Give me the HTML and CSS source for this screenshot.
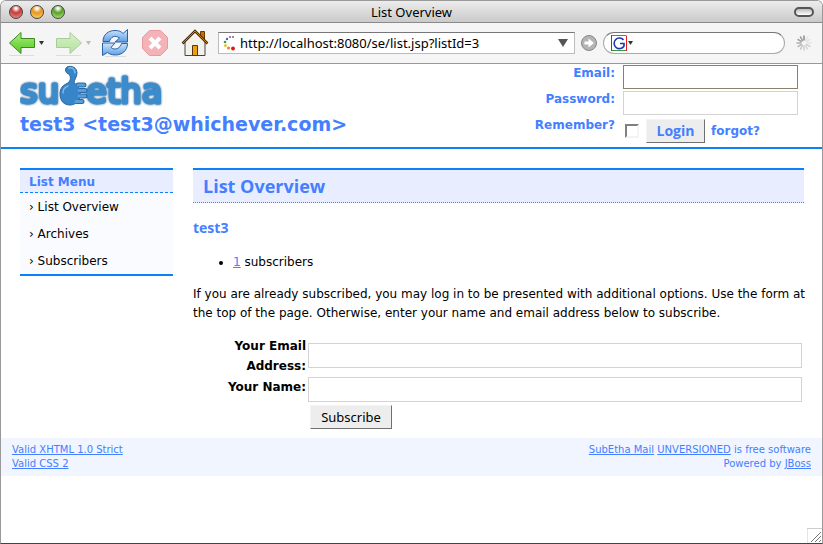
FILE: index.html
```html
<!DOCTYPE html>
<html lang="en">
<head>
<meta charset="utf-8">
<title>List Overview</title>
<link rel="stylesheet" href="styles.css">
</head>
<body>
<div class="window">
  <div class="titlebar">
    <div class="lights">
      <button class="light red" aria-label="Close"></button>
      <button class="light amber" aria-label="Minimize"></button>
      <button class="light green" aria-label="Zoom"></button>
    </div>
    <div class="window-title">List Overview</div>
    <button class="pill" aria-label="Toggle toolbar"></button>
  </div>

  <div class="toolbar">
    <button class="tool nav" aria-label="Back">
      <svg width="38" height="30" viewBox="0 0 38 30">
        <defs>
          <linearGradient id="leaf" x1="0" y1="0" x2="0" y2="1"><stop offset="0" stop-color="#b4ee8c"/><stop offset=".5" stop-color="#7cda4c"/><stop offset="1" stop-color="#5cc82c"/></linearGradient>
          <linearGradient id="sky" x1="0" y1="0" x2="0" y2="1"><stop offset="0" stop-color="#cfe6fb"/><stop offset="1" stop-color="#5a9fe6"/></linearGradient>
        </defs>
        <path d="M3 27.500h25" stroke="#ddd"/>
        <path d="M3.500 15 15 4.500v6h13.500v9H15v6z" fill="url(#leaf)" stroke="#3c8a1e" stroke-linejoin="round"/>
        <path d="M33 13h5l-2.500 4z" fill="#333"/>
      </svg>
    </button>
    <button class="tool nav faded" aria-label="Forward">
      <svg width="38" height="30" viewBox="0 0 38 30">
        <path d="M3 27.500h25" stroke="#bbb"/>
        <path d="M28.500 15 17 4.500v6H3.500v9H17v6z" fill="url(#leaf)" stroke="#3c8a1e" stroke-linejoin="round"/>
        <path d="M33 13h5l-2.500 4z" fill="#666"/>
      </svg>
    </button>
    <button class="tool" aria-label="Reload">
      <svg width="30" height="30" viewBox="0 0 30 30">
        <path d="M5 28.500h21" stroke="#ddd"/>
        <g fill="url(#sky)" stroke="#2a61a8" stroke-linejoin="round">
          <path d="M3 13.500C3 6 9 2.500 15 2.500c4 0 6 1 8 3l4.500-4V14H15l4.500-4C15 6.500 10.500 9 9.500 13.500z"/>
          <path d="M27.500 15.500c0 7.500-6 11.500-12 11.500-4 0-6-1-8-2.500L2.500 27.500V15H15L11 19.500c4 3.500 9.500.5 10.500-4z"/>
        </g>
      </svg>
    </button>
    <button class="tool" aria-label="Stop">
      <svg width="30" height="30" viewBox="0 0 30 30">
        <path d="M9.500 2.500h11L27.500 9.500v11L20.500 27.500h-11L2.500 20.500v-11z" fill="#f4b3b8" stroke="#e79aa0" stroke-linejoin="round"/>
        <path d="m10 10 10 10m0-10-10 10" stroke="#fff" stroke-width="4"/>
      </svg>
    </button>
    <button class="tool" aria-label="Home">
      <svg width="30" height="30" viewBox="0 0 30 30">
        <path d="M20.500 3.500h4v9l-4-4z" fill="#b87408" stroke="#6b3d05"/>
        <path d="M5 14 15 4l10 10v13.500H5z" fill="#f3f1ec" stroke="#444"/>
        <path d="M2.500 15.500 15 3l12.500 12.500" fill="none" stroke="#4b2b08" stroke-width="2.500"/>
        <path d="M3 15 15 3l12 12" fill="none" stroke="#c98210"/>
        <path d="M12.500 17.500h5v10h-5z" fill="#eda011" stroke="#5c3306"/>
      </svg>
    </button>
    <div class="address">
      <svg width="14" height="16" viewBox="0 0 14 16">
        <circle cx="10" cy="2" r="1" fill="#a04c9c"/><circle cx="7" cy="2" r="1" fill="#6a5ca8"/><circle cx="4" cy="4" r="1.200" fill="#4a68b0"/>
        <circle cx="2" cy="7" r="1.300" fill="#3c9a58"/><circle cx="2.500" cy="10.500" r="1.500" fill="#f0c020"/><circle cx="5.500" cy="13" r="1.600" fill="#ee8a1c"/><circle cx="10" cy="13.500" r="1.900" fill="#d81818"/>
      </svg>
      <input class="url" type="text" aria-label="Address" value="http://localhost:8080/se/list.jsp?listId=3">
      <svg width="10" height="8" viewBox="0 0 10 8"><path d="M0 0h10L5 8z" fill="#555"/></svg>
    </div>
    <button class="go" aria-label="Go">
      <svg width="16" height="16" viewBox="0 0 16 16"><circle cx="8" cy="8" r="7.500" fill="#b4b4b4" stroke="#888"/><path d="M3.500 6.500h4v-3L13 8l-5.500 4.500v-3h-4z" fill="#fff"/></svg>
    </button>
    <div class="search">
      <svg width="23" height="17" viewBox="0 0 23 17">
        <path d="M1 .5h14.500" stroke="#3a9a3a"/><path d="M.5 0v16" stroke="#2a48c8"/><path d="M1 15.500h14" stroke="#3a9a3a"/><path d="M15.500 1v15" stroke="#e02020"/>
        <path d="M12.500 5A5.300 5.300 0 1 0 13 11V8.500H9" fill="none" stroke="#1638b0" stroke-width="1.600"/>
        <path d="M17 6h5l-2.500 4z" fill="#333"/>
      </svg>
      <input type="text" aria-label="Search">
    </div>
    <svg class="throbber" width="16" height="16" viewBox="0 0 16 16" stroke-width="1.500" stroke-linecap="round">
      <path d="M8 1v4" stroke="#888"/><path d="m4.500 2 2 3.500" stroke="#999"/><path d="M2 4.500 5.500 6.500" stroke="#a4a4a4"/><path d="M1 8h4" stroke="#b0b0b0"/><path d="m2 11.500 3.500-2" stroke="#bbb"/><path d="m4.500 14 2-3.500" stroke="#c4c4c4"/><path d="M8 15v-4" stroke="#ccc"/><path d="m11.500 14-2-3.500M14 11.500l-3.500-2" stroke="#d4d4d4"/><path d="M15 8h-4M14 4.500l-3.500 2M11.500 2l-2 3.500" stroke="#e4e4e4"/>
    </svg>
  </div>

  <header class="site-header">
    <div class="brand">
      <svg width="150" height="46" viewBox="0 0 150 46" role="img" aria-label="subetha">
        <g class="wordmark">
          <text x="0" y="38">su</text>
          <text x="66" y="38">etha</text>
        </g>
        <path d="M58 20h6M60 25.500h5M60 31h5M57 36.500h5" stroke="#2b669f" stroke-width="5" stroke-linecap="round"/>
        <path d="M47 2c5-2 10 1 10 6 0 4-3 7-3 10 4 2 5 5 6 9 1 8-4 13-10 13s-10-4-10-11c0-6 3-9 8-11 3-3 3-6 1-9-3 0-5-5-2-7z" fill="#3585c8" stroke="#2b669f"/>
        <path d="M58 20h6M59 25.500h6M59 31h6M56 36.500h6" stroke="#55a0dc" stroke-width="3" stroke-linecap="round"/>
        <path d="M49 3c4-1 6 2 6 5M43 28c0-4 2-6 5-7" fill="none" stroke="#7cb8e6" stroke-width="1.500" stroke-linecap="round"/>
      </svg>
      <h1>test3 &lt;test3@whichever.com&gt;</h1>
    </div>
    <form class="login">
      <label for="email">Email:</label>
      <input class="field active" id="email" type="text">
      <label for="password">Password:</label>
      <input class="field" id="password" type="password">
      <label for="remember">Remember?</label>
      <div class="login-actions">
        <input class="check" id="remember" type="checkbox">
        <button class="btn btn-login" type="button">Login</button>
        <a href="#forgot">forgot?</a>
      </div>
    </form>
  </header>

  <div class="columns">
    <nav class="menu">
      <h2>List Menu</h2>
      <ul>
        <li><a href="#overview">› List Overview</a></li>
        <li><a href="#archives">› Archives</a></li>
        <li><a href="#subscribers">› Subscribers</a></li>
      </ul>
    </nav>
    <main>
      <h2 class="page-title">List Overview</h2>
      <h3>test3</h3>
      <ul class="stats"><li><a href="#subscribers">1</a> subscribers</li></ul>
      <p>If you are already subscribed, you may log in to be presented with additional options. Use the form at the top of the page. Otherwise, enter your name and email address below to subscribe.</p>
      <form class="subscribe">
        <label for="your-email">Your Email Address:</label>
        <input class="field" id="your-email" type="text">
        <label for="your-name">Your Name:</label>
        <input class="field" id="your-name" type="text">
        <button class="btn btn-subscribe" type="button">Subscribe</button>
      </form>
    </main>
  </div>

  <footer>
    <div><a href="#xhtml">Valid XHTML 1.0 Strict</a><br><a href="#css">Valid CSS 2</a></div>
    <div class="credits"><a href="#mail">SubEtha Mail</a> <a href="#version">UNVERSIONED</a> is free software<br>Powered by <a href="#jboss">JBoss</a></div>
  </footer>

  <div class="grip">
    <svg width="15" height="15" viewBox="0 0 15 15"><path d="M0 15V.5h15" fill="none" stroke="#ccc"/><path d="m4 14 10-10M8 14l6-6M12 14l2-2" stroke="#777"/></svg>
  </div>
</div>
</body>
</html>
```

FILE: styles.css
```css
* { box-sizing: border-box; }

body {
  margin: 0;
  background: #fff;
  font: 12px/19px "DejaVu Sans", Verdana, sans-serif;
  color: #000;
}

h1, h2, h3, p, ul { margin: 0; padding: 0; }
a { color: inherit; }
button, input { font: inherit; margin: 0; }
button { padding: 0; border: 0; background: none; }
svg { display: block; flex: none; }

.window {
  display: flex;
  flex-direction: column;
  min-height: 100vh;
  border: 1px solid #999;
  border-bottom-color: #444;
  border-radius: 6px 6px 0 0;
}

/* Browser chrome */
.titlebar {
  display: grid;
  grid-template-columns: 1fr auto 1fr;
  align-items: center;
  height: 22px;
  padding: 0 8px;
  border-bottom: 1px solid #8a8a8a;
  border-radius: 5px 5px 0 0;
  background: linear-gradient(#ececec, #cacaca);
  font: 13px/20px "Noto Sans", "Lucida Grande", sans-serif;
}
.lights { display: flex; gap: 7px; }
.light {
  width: 14px;
  height: 14px;
  border: 1px solid #444;
  border-radius: 50%;
}
.red { background: radial-gradient(circle at 50% 20%, #fff 5%, #c83a38 40%, #f09a98); }
.amber { background: radial-gradient(circle at 50% 20%, #fff 5%, #e89420 40%, #ffe070); }
.green { background: radial-gradient(circle at 50% 20%, #fff 5%, #58a028 40%, #bdf080); }
.pill {
  justify-self: end;
  width: 20px;
  height: 10px;
  border: 2px solid #555;
  border-radius: 5px;
  background: linear-gradient(#bbb, #fff);
}

.toolbar {
  display: flex;
  align-items: center;
  height: 41px;
  padding: 0 10px 0 5px;
  border-bottom: 1px solid #999;
  background: #f5f5f5;
}
.tool { margin-right: 10px; }
.nav { margin-right: 9px; }
.faded { opacity: .4; }
.address {
  display: flex;
  align-items: center;
  flex: 1;
  height: 22px;
  margin-left: -2px;
  padding: 0 6px 0 4px;
  border: 1px solid #bbb;
  border-top: 1px solid #777;
  background: #fff;
}
.address input, .search input {
  flex: 1;
  min-width: 0;
  padding: 0 3px;
  border: 0;
  background: none;
  outline: 0;
  font: 13px/18px "Noto Sans", "Lucida Grande", sans-serif;
}
.go { margin: 0 6px; }
.search {
  display: flex;
  align-items: center;
  width: 182px;
  height: 22px;
  padding-left: 7px;
  border: 1px solid #aaa;
  border-top-color: #777;
  border-radius: 11px;
  background: #fff;
}
.throbber { margin-left: 11px; }

/* Page header */
.site-header {
  display: flex;
  justify-content: space-between;
  padding: 1px 24px 4px 19px;
  border-bottom: 2px solid #0c80f8;
  color: #447fff;
}
h1 { font: bold 19px/26px "DejaVu Sans", Verdana, sans-serif; }
.wordmark {
  font: 34px "DejaVu Sans", sans-serif;
  fill: #3c8ccc;
  stroke: #3c8ccc;
  stroke-width: 3px;
  stroke-linejoin: round;
  filter: drop-shadow(0 0 1px #1c4f85);
}
.login {
  display: grid;
  grid-template-columns: auto 175px;
  gap: 2px 8px;
  text-align: right;
  font-weight: bold;
}
.login label { line-height: 16px; }
.login a { text-decoration: none; }
.login-actions {
  display: flex;
  align-items: center;
  gap: 6px;
  padding: 2px 0 0 2px;
}
.field {
  width: 100%;
  height: 24px;
  padding: 0 4px;
  border: 1px solid #d3d3d3;
  border-radius: 0;
  background: #fff;
}
.active { border-color: #87836a; }
.check {
  appearance: none;
  width: 14px;
  height: 14px;
  margin-right: 1px;
  border: 2px solid #f4f4f4;
  border-top-color: #808080;
  border-left-color: #808080;
}
.btn {
  height: 24px;
  border: 1px solid #f4f4f4;
  border-right-color: #707070;
  border-bottom-color: #707070;
  background: #ededed;
}
.btn-login {
  width: 59px;
  color: #447fff;
  font: bold 14px/20px "Open Sans", sans-serif;
}

/* Body columns */
.columns {
  display: grid;
  grid-template-columns: 153px 1fr;
  align-items: start;
  gap: 20px;
  padding: 19px 18px 9px 19px;
}
.menu {
  border-top: 2px solid #0c80f8;
  border-bottom: 2px solid #0c80f8;
  background: #fafbff;
}
.menu h2 {
  padding: 2px 9px 0;
  border-bottom: 1px dashed #0c80f8;
  background: #e8eeff;
  color: #447fff;
  font: bold 12px/20px "DejaVu Sans", Verdana, sans-serif;
}
.menu li {
  padding: 1px 9px 0;
  list-style: none;
  line-height: 26px;
}
.menu a { text-decoration: none; }
.page-title {
  padding: 0 10px;
  border-top: 2px solid #0c80f8;
  border-bottom: 1px dotted #447fff;
  background: #e8eeff;
  color: #447fff;
  font: bold 18px/32px "Open Sans", "Trebuchet MS", sans-serif;
}
h3 {
  margin: 15px 0;
  color: #447fff;
  font: bold 14px/20px "Open Sans", "Trebuchet MS", sans-serif;
}
.stats { padding-left: 40px; }
.stats a { color: #447fff; }
p { margin: 13px -8px 13px 0; }
.subscribe {
  display: grid;
  grid-template-columns: 113px 1fr;
  gap: 0 2px;
  padding-right: 2px;
}
.subscribe label {
  padding-bottom: 1px;
  text-align: right;
  font-weight: bold;
  line-height: 20px;
}
.subscribe .field {
  height: 25px;
  margin: 7px 0 9px;
}
.subscribe #your-name { margin: 0 0 3px; }
.btn-subscribe {
  grid-column: 2;
  width: 82px;
  margin-left: 2px;
  font: 13px/20px "Noto Sans", sans-serif;
}

/* Page footer */
footer {
  display: flex;
  justify-content: space-between;
  padding: 5px 11px;
  background: #f0f5ff;
  color: #447fff;
  font-size: 10px;
  line-height: 14px;
}
.credits { text-align: right; }
.grip { margin: auto 0 0 auto; }
```
